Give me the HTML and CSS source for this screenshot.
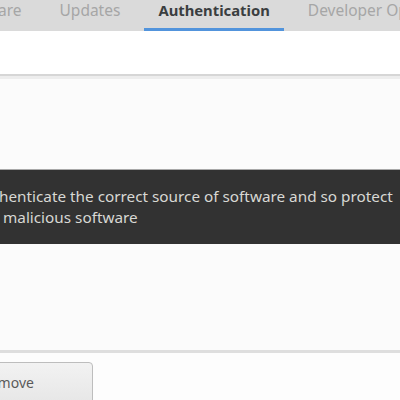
FILE: index.html
```html
<!DOCTYPE html>
<html>
<head>
<meta charset="utf-8">
<link rel="stylesheet" href="styles.css">
</head>
<body>
<div class="window">
  <div class="tabbar">
    <div class="tab first">Software</div>
    <div class="tab">Updates</div>
    <div class="tab active">Authentication</div>
    <div class="tab">Developer Options</div>
  </div>
  <div class="header"></div>
  <div class="list">
    <div class="tooltip">
      <div class="line">henticate the correct source of software and so protect</div>
      <div class="line second">malicious software</div>
    </div>
  </div>
  <div class="actions">
    <button class="btn">Remove</button>
  </div>
</div>
</body>
</html>
```

FILE: styles.css
```css
html, body {
  margin: 0;
  padding: 0;
  background: #fdfdfd;
  overflow: hidden;
}
.window {
  width: 400px;
  height: 400px;
  display: flex;
  flex-direction: column;
  font-family: "Noto Sans", "Open Sans", sans-serif;
  font-size: 15px;
  overflow: hidden;
}
.tabbar {
  height: 31px;
  background: #dadada;
  display: flex;
  gap: 10px;
  flex-shrink: 0;
  white-space: nowrap;
}
.tab {
  padding: 0 14px;
  height: 28px;
  line-height: 21px;
  font-size: 15.5px;
  color: #a6a6a6;
  border-bottom: 3px solid transparent;
  flex-shrink: 0;
}
.tab.first {
  margin-left: -57px;
}
.tab.active {
  color: #3a3e40;
  font-weight: bold;
  font-size: 14.8px;
  border-bottom-color: #5294dc;
}
.header {
  height: 43px;
  background: #ffffff;
  border-bottom: 2px solid #d6d6d6;
  flex-shrink: 0;
}
.list {
  position: relative;
  height: 277px;
  background: #fbfbfb;
  border-top: 3px solid #ededed;
  border-bottom: 3px solid #dedede;
  flex-shrink: 0;
  box-sizing: border-box;
}
.tooltip {
  position: absolute;
  top: 90px;
  left: -10px;
  right: -10px;
  height: 75px;
  box-sizing: border-box;
  background: #323232;
  border-top: 1px solid #a8a8a8;
  color: #d8d8d4;
  padding: 16px 0 0 9px;
  font-size: 15.3px;
  line-height: 21px;
  white-space: nowrap;
}
.line.second {
  padding-left: 4px;
}
.actions {
  flex: 1;
  background: #fdfdfd;
  padding-top: 9px;
}
.btn {
  display: block;
  margin-left: -30px;
  width: 123px;
  height: 44px;
  background: linear-gradient(#f2f2f2, #e6e6e6);
  border: 1px solid #bdbdbd;
  border-radius: 4px;
  font-family: "Noto Sans", "Open Sans", sans-serif;
  font-size: 14px;
  color: #5a5a5a;
  text-align: left;
  padding: 0 0 4px 10px;
}
```
